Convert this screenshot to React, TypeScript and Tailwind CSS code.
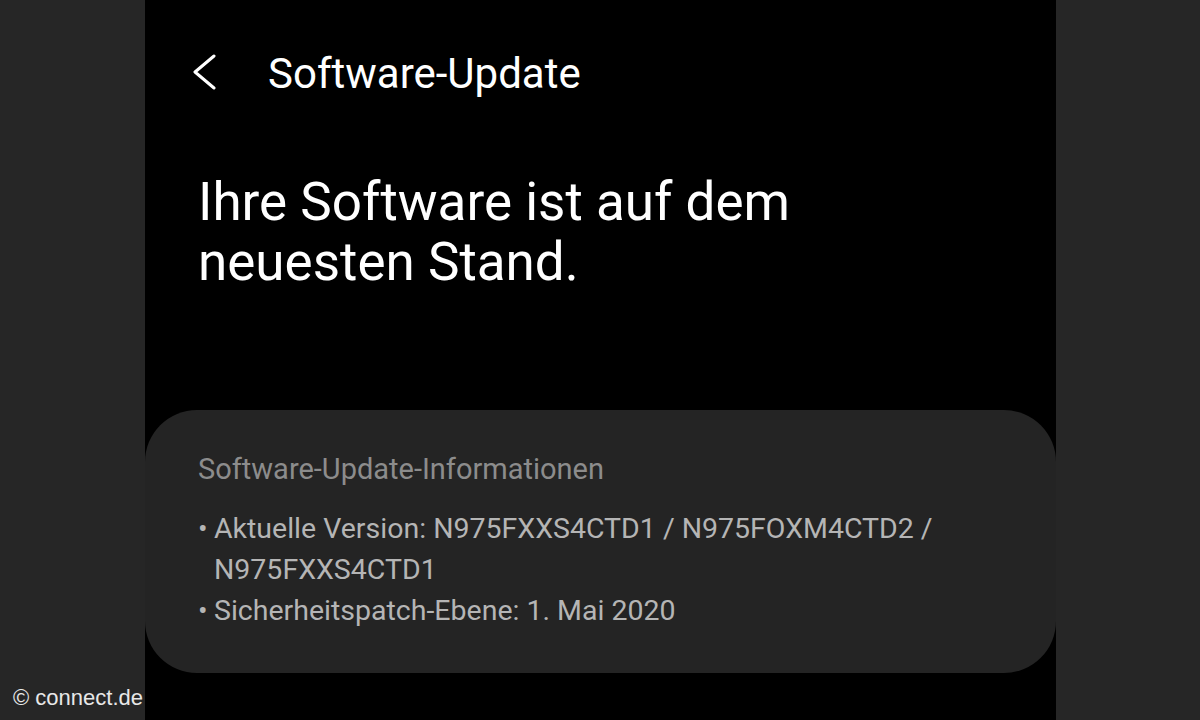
import React from "react";

export default function App() {
  return (
    <div className="flex h-[720px] w-[1200px] overflow-hidden bg-[#262626]" style={{ fontFamily: "Roboto, 'Noto Sans', sans-serif" }}>
      <div className="flex w-[145px] shrink-0 flex-col justify-end pb-[9px] pl-[13px]">
        <span className="whitespace-nowrap text-[22px] leading-[26px] text-[#e8e8e8]" style={{ fontFamily: "'Liberation Sans', Arial, sans-serif" }}>
          © connect.de
        </span>
      </div>
      <div className="flex w-[911px] shrink-0 flex-col bg-black">
        <div className="flex items-start pl-[47px] pt-[53px]">
          <svg width="25" height="36" viewBox="0 0 25 36" className="mt-[1px]">
            <polyline points="22,2 3,18 22,34" fill="none" stroke="#ffffff" strokeWidth="3" strokeLinecap="round" strokeLinejoin="round" />
          </svg>
          <span className="ml-[51px] text-[42px] leading-[42px] text-white">Software-Update</span>
        </div>
        <div className="mt-[77px] pl-[53px] text-[53px] leading-[60px] text-white">
          Ihre Software ist auf dem
          <br />
          neuesten Stand.
        </div>
        <div className="mt-[118px] h-[263px] rounded-[52px] bg-[#242424] pl-[53px] pt-[43px]">
          <div className="text-[29px] leading-[32px] text-[#8c8c8c]">Software-Update-Informationen</div>
          <div className="mt-[23px] text-[28.5px] leading-[41px] text-[#b5b5b5]">
            <div className="flex">
              <span className="w-[16px] shrink-0">•</span>
              <span>
                Aktuelle Version: N975FXXS4CTD1 / N975FOXM4CTD2 /
                <br />
                N975FXXS4CTD1
              </span>
            </div>
            <div className="flex">
              <span className="w-[16px] shrink-0">•</span>
              <span>Sicherheitspatch-Ebene: 1. Mai 2020</span>
            </div>
          </div>
        </div>
      </div>
      <div className="flex-1" />
    </div>
  );
}
